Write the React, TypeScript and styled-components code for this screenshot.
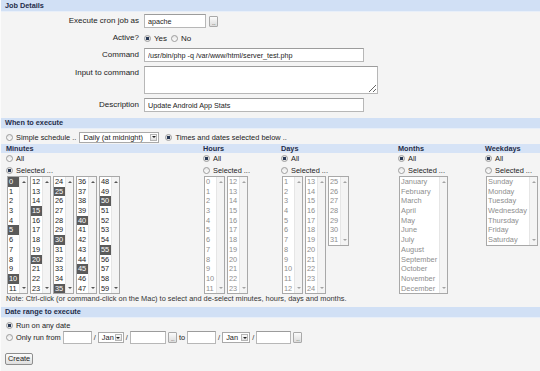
import React from "react";
import styled, { createGlobalStyle } from "styled-components";

const GlobalStyle = createGlobalStyle`
  html, body {
    margin: 0;
    padding: 0;
    background: #f4f4f4;
  }
  body {
    font-family: "Liberation Sans", Arial, sans-serif;
    font-size: 7.4px;
    color: #222;
  }
`;

const Page = styled.div`
  width: 540px;
  height: 371px;
  overflow: hidden;
  background: #f4f4f4;
  border-left: 1px solid #fbfbfb;
  box-sizing: border-box;
`;

const SectionHead = styled.div<{ $h?: number }>`
  height: ${(p) => p.$h ?? 10}px;
  line-height: ${(p) => p.$h ?? 10}px;
  padding-left: 4px;
  background: #d1e0f5;
  border-bottom: 1px solid #e8eff9;
  font-weight: bold;
  font-size: 7.3px;
  color: #1f2d4a;
`;

/* job details */
const FormGrid = styled.div`
  display: grid;
  grid-template-columns: 138px auto;
  column-gap: 5px;
  row-gap: 4px;
  padding: 2px 0 6px;
  justify-items: start;
  align-items: start;
  font-size: 8px;
`;

const Label = styled.div<{ $h?: number }>`
  justify-self: end;
  line-height: ${(p) => p.$h ?? 14}px;
  color: #222;
`;

const TextInput = styled.input<{ $w: number }>`
  width: ${(p) => p.$w}px;
  height: 14px;
  box-sizing: border-box;
  margin: 0;
  padding: 0 3px;
  border: 1px solid #b7b7b7;
  border-top-color: #9c9c9c;
  background: #fff;
  font: inherit;
  font-size: 7.2px;
  color: #222;
  outline: none;
`;

const TextArea = styled.textarea<{ $w: number; $h: number }>`
  width: ${(p) => p.$w}px;
  height: ${(p) => p.$h}px;
  box-sizing: border-box;
  margin: 0;
  padding: 1px 3px;
  border: 1px solid #b7b7b7;
  border-top-color: #9c9c9c;
  background: #fff;
  font: inherit;
  font-size: 7.2px;
  outline: none;
`;

const Inline = styled.div<{ $gap?: number }>`
  display: flex;
  align-items: center;
  gap: ${(p) => p.$gap ?? 3}px;
  white-space: nowrap;
`;

const DotsButton = styled.span`
  width: 9px;
  height: 11px;
  box-sizing: border-box;
  border: 1px solid #a9a9a9;
  border-radius: 1px;
  background: linear-gradient(#fbfbfb, #dcdcdc);
  color: #555;
  font-size: 6px;
  line-height: 12px;
  text-align: center;
  letter-spacing: -0.5px;
  flex: none;
`;

const Radio = styled.span<{ $on?: boolean }>`
  display: inline-block;
  width: 7px;
  height: 7px;
  box-sizing: border-box;
  border-radius: 50%;
  border: 1px solid #9d9d9d;
  background: ${(p) =>
    p.$on
      ? "radial-gradient(circle, #2a3a56 0 1.5px, #e6e6e6 2px)"
      : "linear-gradient(#e6e6e6, #fdfdfd)"};
  flex: none;
`;

const Choice = styled.div<{ $h?: number; $ml?: number }>`
  display: flex;
  align-items: center;
  gap: 3px;
  height: ${(p) => p.$h ?? 12}px;
  margin-left: ${(p) => p.$ml ?? 0}px;
  white-space: nowrap;
`;

/* when to execute */
const ScheduleRow = styled.div`
  display: flex;
  align-items: center;
  height: 10px;
  padding: 3px 0 2px 5px;
  gap: 3px;
  white-space: nowrap;
`;

const FakeSelect = styled.div<{ $w: number }>`
  display: flex;
  align-items: stretch;
  width: ${(p) => p.$w}px;
  height: 11px;
  box-sizing: border-box;
  border: 1px solid #a9a9a9;
  background: #fff;
  flex: none;
`;

const SelectText = styled.span`
  flex: 1;
  padding-left: 3px;
  line-height: 9px;
  overflow: hidden;
`;

const DropBtn = styled.span`
  width: 7px;
  margin: 1px;
  box-sizing: border-box;
  border: 1px solid #b5b5b5;
  background: linear-gradient(#fbfbfb, #e0e0e0);
  display: flex;
  align-items: center;
  justify-content: center;
  &::after {
    content: "";
    border-left: 2px solid transparent;
    border-right: 2px solid transparent;
    border-top: 2px solid #222;
  }
`;

const ScheduleGrid = styled.div`
  display: grid;
  grid-template-columns: 200px 78px 117px 87px 1fr;
`;

const Column = styled.div`
  display: flex;
  flex-direction: column;
`;

const ColHead = styled.div<{ $inset: number }>`
  height: 9px;
  line-height: 9px;
  padding-left: ${(p) => p.$inset}px;
  background: #d6e3f6;
  font-weight: bold;
  font-size: 7.3px;
  color: #1f2d4a;
`;

const ColBody = styled.div<{ $inset: number }>`
  padding-left: ${(p) => p.$inset}px;
`;

const Boxes = styled.div`
  display: flex;
  align-items: flex-start;
  gap: 2px;
  margin-left: 1px;
`;

const ListBox = styled.div<{ $w: number; $dim?: boolean }>`
  display: flex;
  width: ${(p) => p.$w}px;
  box-sizing: border-box;
  border: 1px solid #a8a8a8;
  background: #fff;
  color: ${(p) => (p.$dim ? "#8e8e8e" : "#1c1c1c")};
  --arrow: ${(p) => (p.$dim ? "#a3a3a3" : "#555")};
`;

const OptionList = styled.div`
  flex: 1;
  min-width: 0;
`;

const Option = styled.div<{ $sel?: boolean }>`
  height: 9.7px;
  line-height: 9.7px;
  padding-left: 1px;
  white-space: nowrap;
  overflow: hidden;
  background: ${(p) => (p.$sel ? "#5a5a5a" : "transparent")};
  color: ${(p) => (p.$sel ? "#fff" : "inherit")};
`;

const Track = styled.div`
  width: 8px;
  flex: none;
  box-sizing: border-box;
  background: #f4f4f4;
  border-left: 1px solid #e6e6e6;
  display: flex;
  flex-direction: column;
  justify-content: space-between;
  align-items: center;
  padding: 4px 0;
`;

const Arrow = styled.span<{ $down?: boolean }>`
  width: 0;
  height: 0;
  border-left: 2px solid transparent;
  border-right: 2px solid transparent;
  ${(p) =>
    p.$down
      ? "border-top: 2px solid var(--arrow);"
      : "border-bottom: 2px solid var(--arrow);"}
`;

const Note = styled.div`
  line-height: 10px;
  padding: 0 0 3px 5px;
  color: #333;
`;

/* date range */
const DateBody = styled.div`
  padding: 1px 0 0 5px;
`;

const Slash = styled.span`
  color: #333;
`;

const SmallInput = styled(TextInput)`
  height: 13px;
`;

const CreateButton = styled.button`
  margin: 9px 0 0 4px;
  height: 12px;
  padding: 0 2px;
  box-sizing: border-box;
  border: 1px solid #8e8e8e;
  border-radius: 2px;
  background: linear-gradient(#fcfcfc, #dedede);
  font: inherit;
  font-size: 7.4px;
  line-height: 10px;
  color: #222;
`;

const range = (a: number, b: number) =>
  Array.from({ length: b - a + 1 }, (_, i) => String(a + i));

const months = [
  "January", "February", "March", "April", "May", "June",
  "July", "August", "September", "October", "November", "December",
];
const weekdays = [
  "Sunday", "Monday", "Tuesday", "Wednesday", "Thursday", "Friday", "Saturday",
];

const List = ({
  items,
  w,
  dim,
  selected,
}: {
  items: string[];
  w: number;
  dim?: boolean;
  selected?: (v: string) => boolean;
}) => (
  <ListBox $w={w} $dim={dim}>
    <OptionList>
      {items.map((it) => (
        <Option key={it} $sel={selected ? selected(it) : false}>
          {it}
        </Option>
      ))}
    </OptionList>
    <Track>
      <Arrow />
      <Arrow $down />
    </Track>
  </ListBox>
);

const Picker = ({
  title,
  inset,
  all,
  children,
}: {
  title: string;
  inset: number;
  all?: boolean;
  children: React.ReactNode;
}) => (
  <Column>
    <ColHead $inset={inset}>{title}</ColHead>
    <ColBody $inset={inset}>
      <Choice $h={11}>
        <Radio $on={all} />
        All
      </Choice>
      <Choice $h={12}>
        <Radio $on={!all} />
        Selected ...
      </Choice>
      <Boxes>{children}</Boxes>
    </ColBody>
  </Column>
);

const App = () => {
  const every5 = (v: string) => Number(v) % 5 === 0;

  return (
    <Page>
      <GlobalStyle />
      <SectionHead $h={11}>Job Details</SectionHead>
      <FormGrid>
        <Label>Execute cron job as</Label>
        <Inline>
          <TextInput $w={62} value="apache" readOnly />
          <DotsButton>...</DotsButton>
        </Inline>

        <Label $h={12}>Active?</Label>
        <Inline $gap={4}>
          <Choice>
            <Radio $on />
            Yes
          </Choice>
          <Choice>
            <Radio />
            No
          </Choice>
        </Inline>

        <Label>Command</Label>
        <TextInput
          $w={220}
          value="/usr/bin/php -q /var/www/html/server_test.php"
          readOnly
        />

        <Label>Input to command</Label>
        <TextArea $w={234} $h={28} readOnly />

        <Label>Description</Label>
        <TextInput $w={220} value="Update Android App Stats" readOnly />
      </FormGrid>

      <SectionHead>When to execute</SectionHead>
      <ScheduleRow>
        <Radio />
        <span>Simple schedule ..</span>
        <FakeSelect $w={80}>
          <SelectText>Daily (at midnight)</SelectText>
          <DropBtn />
        </FakeSelect>
        <Choice $h={10} $ml={3}>
          <Radio $on />
          Times and dates selected below ..
        </Choice>
      </ScheduleRow>

      <ScheduleGrid>
        <Picker title="Minutes" inset={5}>
          {[0, 12, 24, 36, 48].map((s) => (
            <List key={s} w={21} items={range(s, s + 11)} selected={every5} />
          ))}
        </Picker>
        <Picker title="Hours" inset={2} all>
          <List w={21} dim items={range(0, 11)} />
          <List w={21} dim items={range(12, 23)} />
        </Picker>
        <Picker title="Days" inset={2} all>
          <List w={21} dim items={range(1, 12)} />
          <List w={21} dim items={range(13, 24)} />
          <List w={21} dim items={range(25, 31)} />
        </Picker>
        <Picker title="Months" inset={2} all>
          <List w={49} dim items={months} />
        </Picker>
        <Picker title="Weekdays" inset={2} all>
          <List w={52} dim items={weekdays} />
        </Picker>
      </ScheduleGrid>
      <Note>
        Note: Ctrl-click (or command-click on the Mac) to select and de-select
        minutes, hours, days and months.
      </Note>

      <SectionHead>Date range to execute</SectionHead>
      <DateBody>
        <Choice>
          <Radio $on />
          Run on any date
        </Choice>
        <Inline $gap={2}>
          <Choice $h={13}>
            <Radio />
            Only run from
          </Choice>
          <SmallInput $w={29} readOnly />
          <Slash>/</Slash>
          <FakeSelect $w={26}>
            <SelectText>Jan</SelectText>
            <DropBtn />
          </FakeSelect>
          <Slash>/</Slash>
          <SmallInput $w={36} readOnly />
          <DotsButton>...</DotsButton>
          <span>to</span>
          <SmallInput $w={29} readOnly />
          <Slash>/</Slash>
          <FakeSelect $w={28}>
            <SelectText>Jan</SelectText>
            <DropBtn />
          </FakeSelect>
          <Slash>/</Slash>
          <SmallInput $w={35} readOnly />
          <DotsButton>...</DotsButton>
        </Inline>
      </DateBody>
      <CreateButton>Create</CreateButton>
    </Page>
  );
};

export default App;
